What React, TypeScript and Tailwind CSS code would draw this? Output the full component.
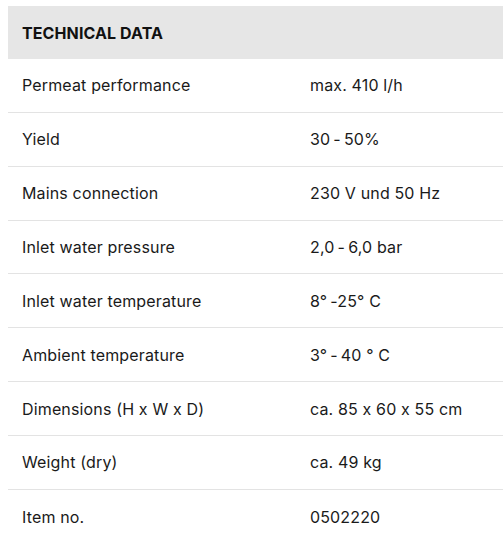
const rows: [string, string][] = [
  ['Permeat performance', 'max. 410 l/h'],
  ['Yield', '30\u2009-\u200950%'],
  ['Mains connection', '230 V und 50 Hz'],
  ['Inlet water pressure', '2,0\u2009-\u20096,0 bar'],
  ['Inlet water temperature', '8°\u2009-25° C'],
  ['Ambient temperature', '3°\u2009-\u200940 ° C'],
  ['Dimensions (H x W x D)', 'ca. 85 x 60 x 55 cm'],
  ['Weight (dry)', 'ca. 49 kg'],
  ['Item no.', '0502220'],
];

export default function App() {
  return (
    <div className="min-h-screen bg-white pl-2 pt-1.5 font-['Inter',sans-serif] text-[#1a1a1a] [font-feature-settings:'calt'_0]">
      <div className="w-full">
        <div className="flex h-[53px] items-center bg-[#e6e6e6] px-[14px]">
          <h2 className="text-[16px] font-bold tracking-[0.1px] text-[#111]">TECHNICAL DATA</h2>
        </div>
        {rows.map(([label, value], i) => (
          <div
            key={label}
            className={`grid h-[53.86px] grid-cols-[288px_1fr] items-center px-[14px] text-[16px] tracking-[0.15px] ${
              i < rows.length - 1 ? 'border-b border-[#e3e3e3]' : ''
            }`}
          >
            <span>{label}</span>
            <span>{value}</span>
          </div>
        ))}
      </div>
    </div>
  );
}
